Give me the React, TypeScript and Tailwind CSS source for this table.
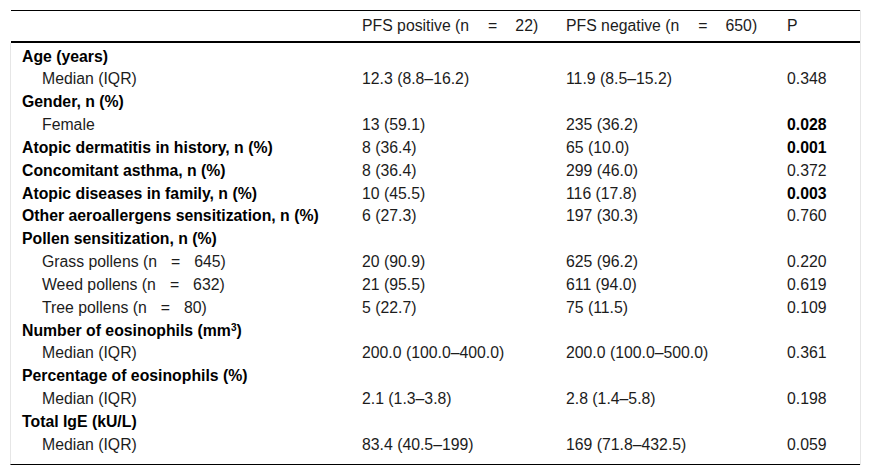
const EQ = ({ n, wide }: { n: string; wide?: boolean }) => (
  <>
    (n<span className={wide ? "ml-[19px] mr-[18px]" : "ml-[14px] mr-[14px]"}>=</span>
    {n})
  </>
);

type Row = {
  label: React.ReactNode;
  sub?: boolean;
  pos?: string;
  neg?: string;
  p?: string;
  bold?: boolean;
};

const ROWS: Row[] = [
  { label: "Age (years)" },
  { label: "Median (IQR)", sub: true, pos: "12.3 (8.8–16.2)", neg: "11.9 (8.5–15.2)", p: "0.348" },
  { label: "Gender, n (%)" },
  { label: "Female", sub: true, pos: "13 (59.1)", neg: "235 (36.2)", p: "0.028", bold: true },
  { label: "Atopic dermatitis in history, n (%)", pos: "8 (36.4)", neg: "65 (10.0)", p: "0.001", bold: true },
  { label: "Concomitant asthma, n (%)", pos: "8 (36.4)", neg: "299 (46.0)", p: "0.372" },
  { label: "Atopic diseases in family, n (%)", pos: "10 (45.5)", neg: "116 (17.8)", p: "0.003", bold: true },
  { label: "Other aeroallergens sensitization, n (%)", pos: "6 (27.3)", neg: "197 (30.3)", p: "0.760" },
  { label: "Pollen sensitization, n (%)" },
  { label: <>Grass pollens <EQ n="645" /></>, sub: true, pos: "20 (90.9)", neg: "625 (96.2)", p: "0.220" },
  { label: <>Weed pollens <EQ n="632" /></>, sub: true, pos: "21 (95.5)", neg: "611 (94.0)", p: "0.619" },
  { label: <>Tree pollens <EQ n="80" /></>, sub: true, pos: "5 (22.7)", neg: "75 (11.5)", p: "0.109" },
  { label: <>Number of eosinophils (mm<span className="text-[10px] relative -top-[5px]">3</span>)</> },
  { label: "Median (IQR)", sub: true, pos: "200.0 (100.0–400.0)", neg: "200.0 (100.0–500.0)", p: "0.361" },
  { label: "Percentage of eosinophils (%)" },
  { label: "Median (IQR)", sub: true, pos: "2.1 (1.3–3.8)", neg: "2.8 (1.4–5.8)", p: "0.198" },
  { label: "Total IgE (kU/L)" },
  { label: "Median (IQR)", sub: true, pos: "83.4 (40.5–199)", neg: "169 (71.8–432.5)", p: "0.059" },
];

const COLS = "grid grid-cols-[340px_204px_221px_1fr]";

export default function App() {
  return (
    <div
      className="min-h-[476px] bg-white text-[15.8px] text-[#1c1c1c] pt-[10px] pl-[10px]"
      style={{ fontFamily: '"Liberation Sans", Arial, sans-serif' }}
    >
      <div className="w-[851px] border-r border-[#e6e6e6]">
        {/* header */}
        <div className={`${COLS} ml-[1px] border-t border-black border-b-2 h-[33px] items-center leading-none`}>
          <div />
          <div className="pl-[11px]">
            PFS positive <EQ n="22" wide />
          </div>
          <div className="pl-[11px]">
            PFS negative <EQ n="650" wide />
          </div>
          <div className="pl-[11px]">P</div>
        </div>

        {/* body */}
        <div className="border-l border-[#e6e6e6] pt-[2px] pb-[8px] border-b border-b-black">
          {ROWS.map((r, i) => (
            <div key={i} className={`${COLS} h-[22.85px] items-center leading-none`}>
              <div className={r.sub ? "pl-[31px]" : "pl-[11px] font-bold text-black"}>{r.label}</div>
              <div className="pl-[11px]">{r.pos}</div>
              <div className="pl-[11px]">{r.neg}</div>
              <div className={r.bold ? "pl-[11px] font-bold text-black" : "pl-[11px]"}>{r.p}</div>
            </div>
          ))}
        </div>
      </div>
    </div>
  );
}
